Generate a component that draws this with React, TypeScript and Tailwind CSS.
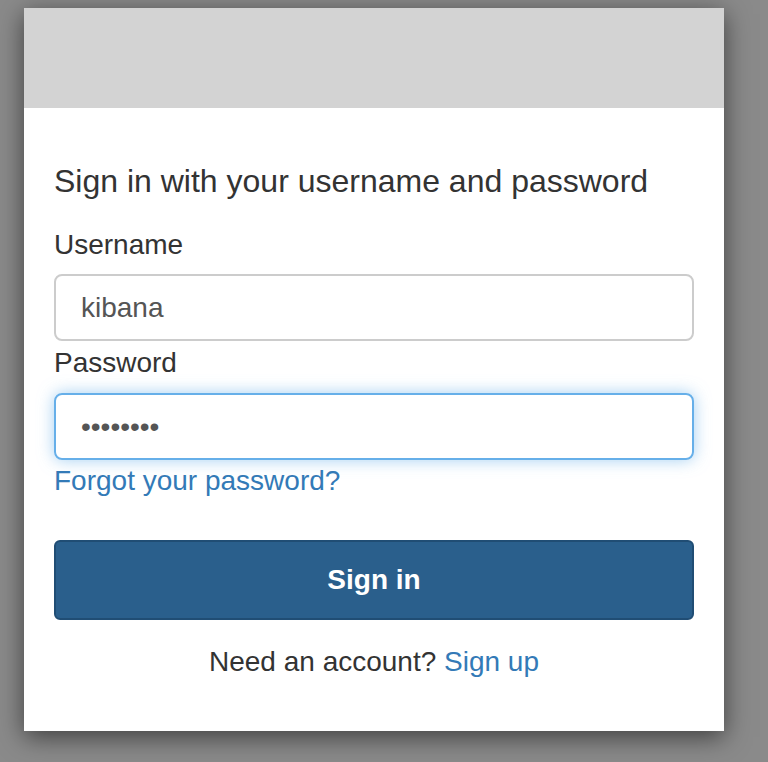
const App = () => {
  return (
    <div
      className="min-h-[762px] w-full bg-[#8a8a8a] pt-2 pl-6"
      style={{ fontFamily: '"Liberation Sans", Arial, sans-serif' }}
    >
      <div className="w-[700px] bg-white shadow-[0_6px_24px_rgba(0,0,0,0.55)]">
        {/* Banner */}
        <div className="h-[100px] bg-[#d3d3d3]" />

        {/* Form */}
        <div className="px-[30px] pt-[53px] pb-[49px] text-[#333]">
          <h1 className="text-[32px] leading-[40px] mb-6">
            Sign in with your username and password
          </h1>

          <label className="block text-[28px] leading-[40px] mb-[9px]">
            Username
          </label>
          <div className="h-[67px] rounded-lg border-2 border-[#cccccc] flex items-center px-[25px] text-[28px] text-[#555]">
            kibana
          </div>

          <label className="block text-[28px] leading-[40px] mt-[2px] mb-[10px]">
            Password
          </label>
          <div className="h-[67px] rounded-lg border-2 border-[#66afe9] shadow-[0_0_16px_rgba(102,175,233,0.6)] flex items-center px-[25px] text-[28px] text-[#555]">
            ••••••••
          </div>

          <a
            href="#"
            className="block mt-px text-[28px] leading-[40px] text-[#337ab7]"
          >
            Forgot your password?
          </a>

          <button className="mt-[39px] w-full h-[80px] rounded-md border-2 border-[#204d74] bg-[#2a5f8c] text-white text-[28px] font-bold">
            Sign in
          </button>

          <p className="mt-[22px] text-center text-[28px] leading-[40px]">
            Need an account?{" "}
            <a href="#" className="text-[#337ab7]">
              Sign up
            </a>
          </p>
        </div>
      </div>
    </div>
  );
};

export default App;
